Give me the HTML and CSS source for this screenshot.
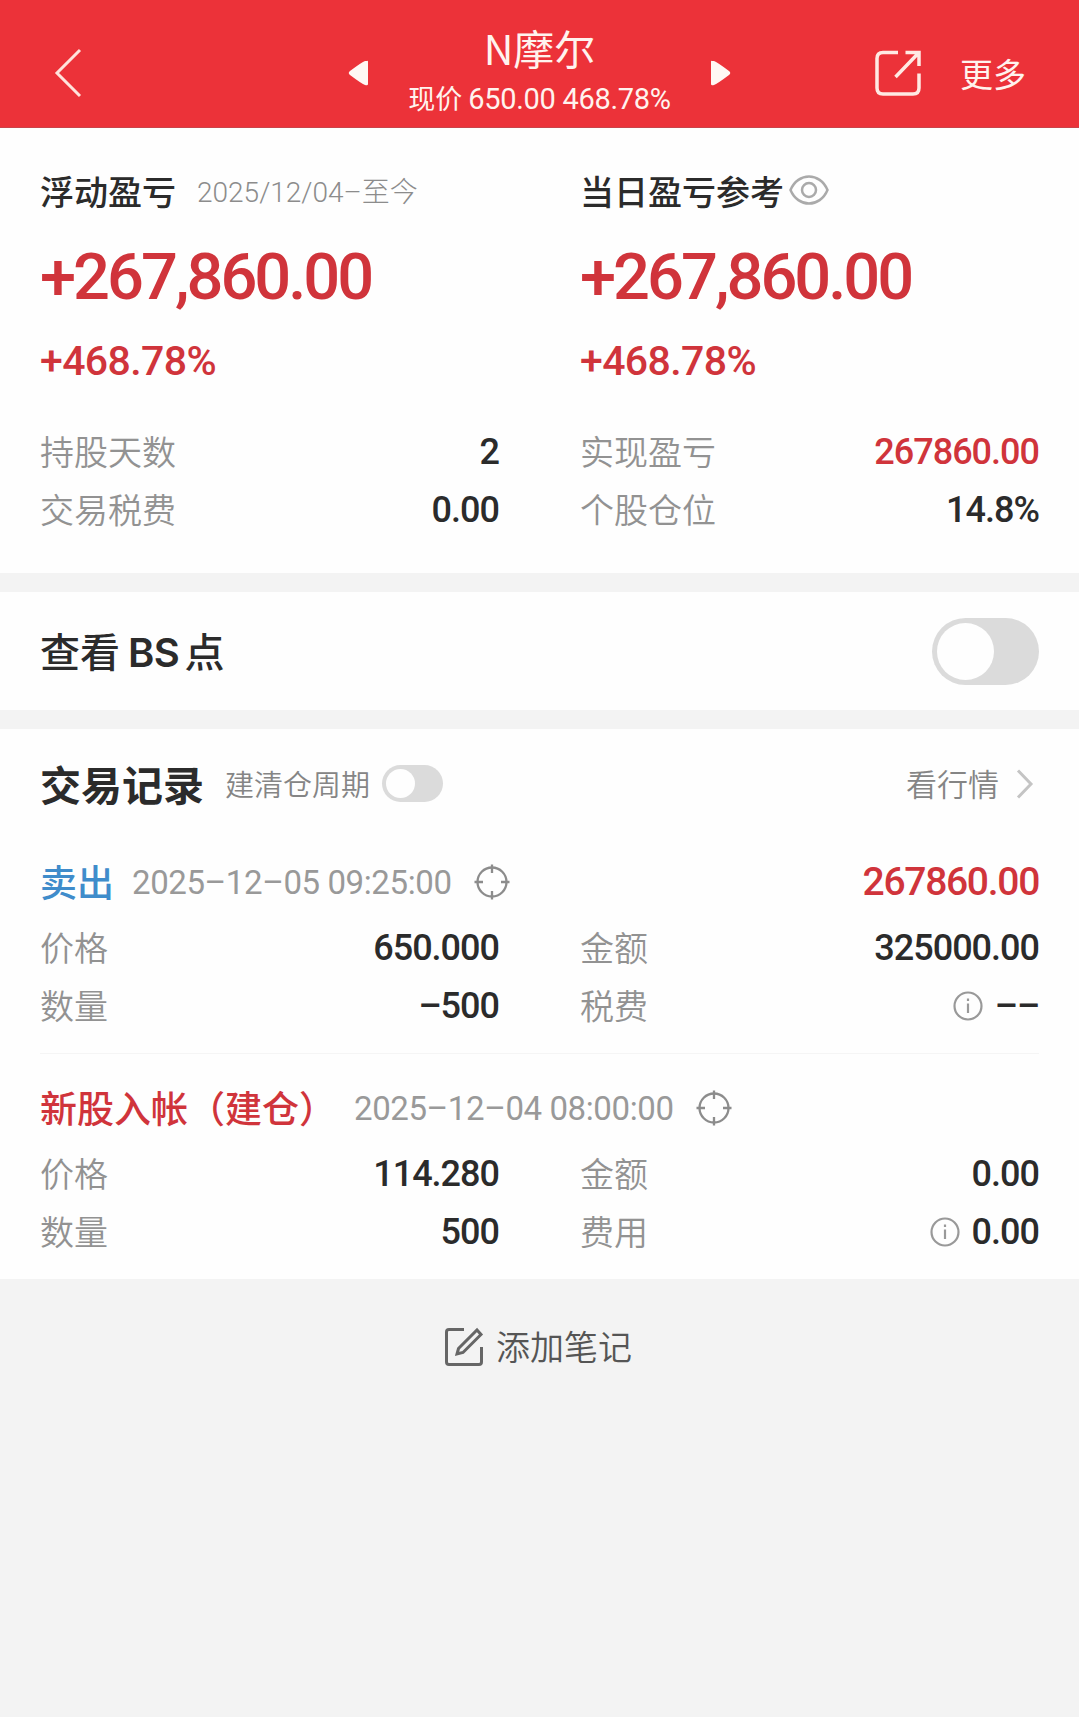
FILE: index.html
```html
<!DOCTYPE html>
<html lang="zh-CN">
<head>
    <meta charset="utf-8">
    <title>N摩尔</title>
    <link rel="stylesheet" href="styles.css">
</head>

<body>
    <div class="header">
        <svg class="back" width="30" height="52" viewBox="0 0 30 52"><path d="M27 3L4 26L27 49"/></svg>
        <div class="stock">
            <svg class="arrow" width="22" height="30" viewBox="0 0 22 30"><path d="M20 3Q21 2 21 4V26Q21 28 18 27Q15 26 3 17Q0.500 15 3 13Q15 4 18 3Z"/></svg>
            <div class="stock-info">
                <div class="stock-name">N摩尔</div>
                <div class="stock-price">现价 <span class="num">650.00 468.78%</span></div>
            </div>
            <svg class="arrow" width="22" height="30" viewBox="0 0 22 30"><path d="M2 3Q1 2 1 4V26Q1 28 4 27Q7 26 19 17Q21.500 15 19 13Q7 4 4 3Z"/></svg>
        </div>
        <div class="actions">
            <svg class="share" width="48" height="48" viewBox="0 0 48 48"><path d="M24 3.500H9Q3 3.500 3 9.500V39Q3 45 9 45H39Q45 45 45 39V24.500M31.500 3.500H45V17M45 3.500L21.500 28"/></svg>
            <div class="more">更多</div>
        </div>
    </div>

    <div class="card summary">
        <div class="columns">
            <div class="col">
                <div class="profit-title">浮动盈亏 <span class="range">2025/12/04–至今</span></div>
                <div class="profit num">+267,860.00</div>
                <div class="percent num">+468.78%</div>
                <div class="row"><span class="label">持股天数</span><span class="value num">2</span></div>
                <div class="row"><span class="label">交易税费</span><span class="value num">0.00</span></div>
            </div>
            <div class="col">
                <div class="profit-title">当日盈亏参考<svg class="eye" width="42" height="32" viewBox="0 0 42 32"><path d="M2.500 16C10-2 32-2 39.500 16C32 34 10 34 2.500 16Z"/><circle cx="21" cy="16" r="7"/></svg></div>
                <div class="profit num">+267,860.00</div>
                <div class="percent num">+468.78%</div>
                <div class="row"><span class="label">实现盈亏</span><span class="value num red">267860.00</span></div>
                <div class="row"><span class="label">个股仓位</span><span class="value num">14.8%</span></div>
            </div>
        </div>
    </div>

    <div class="card bs">
        <div class="bs-title">查看<span class="latin">BS</span>点</div>
        <div class="switch"></div>
    </div>

    <div class="card records">
        <div class="records-head">
            <div class="records-title">交易记录</div>
            <div class="cycle">建清仓周期</div>
            <div class="switch small"></div>
            <div class="quote">看行情</div>
            <svg class="chevron" width="18" height="32" viewBox="0 0 18 32"><path d="M2 2.500L15 16L2 29.500"/></svg>
        </div>

        <div class="record">
            <div class="record-head">
                <span class="type sell">卖出</span>
                <span class="time num">2025–12–05 09:25:00</span>
                <svg class="target" width="36" height="36" viewBox="0 0 36 36"><circle cx="18" cy="18" r="14.500"/><path d="M18 0.500V9M18 27V35.500M0.500 18H9M27 18H35.500"/></svg>
                <span class="total num">267860.00</span>
            </div>
            <div class="columns">
                <div class="col">
                    <div class="row"><span class="label">价格</span><span class="value num">650.000</span></div>
                    <div class="row"><span class="label">数量</span><span class="value num">–500</span></div>
                </div>
                <div class="col">
                    <div class="row"><span class="label">金额</span><span class="value num">325000.00</span></div>
                    <div class="row"><span class="label">税费</span><span class="value num"><svg class="info" width="30" height="30" viewBox="0 0 30 30"><circle cx="15" cy="15" r="13.500"/><path d="M15 12.500V22M15 7.500V10"/></svg>––</span></div>
                </div>
            </div>
        </div>

        <div class="record second">
            <div class="record-head">
                <span class="type buy">新股入帐（建仓）</span>
                <span class="time num">2025–12–04 08:00:00</span>
                <svg class="target" width="36" height="36" viewBox="0 0 36 36"><circle cx="18" cy="18" r="14.500"/><path d="M18 0.500V9M18 27V35.500M0.500 18H9M27 18H35.500"/></svg>
            </div>
            <div class="columns">
                <div class="col">
                    <div class="row"><span class="label">价格</span><span class="value num">114.280</span></div>
                    <div class="row"><span class="label">数量</span><span class="value num">500</span></div>
                </div>
                <div class="col">
                    <div class="row"><span class="label">金额</span><span class="value num">0.00</span></div>
                    <div class="row"><span class="label">费用</span><span class="value num"><svg class="info" width="30" height="30" viewBox="0 0 30 30"><circle cx="15" cy="15" r="13.500"/><path d="M15 12.500V22M15 7.500V10"/></svg>0.00</span></div>
                </div>
            </div>
        </div>
    </div>

    <div class="note">
        <svg class="edit" width="40" height="40" viewBox="0 0 40 40"><path d="M20 2.500H5Q2.500 2.500 2.500 5V35Q2.500 37.500 5 37.500H35Q37.500 37.500 37.500 35V20M33 3L37 7.500L19 25.500L13 27L14.500 21.500Z"/></svg>
        <span>添加笔记</span>
    </div>
</body>
</html>
```

FILE: styles.css
```css
* {
    box-sizing: border-box;
}

body {
    margin: 0;
    min-height: 1717px;
    background-color: #f3f3f3;
    color: #2b2b2b;
    font-family: "Noto Sans CJK SC", sans-serif;
    white-space: nowrap;
}

svg {
    display: block;
    flex: none;
    fill: none;
}

.num {
    font-family: Roboto, "Noto Sans CJK SC", sans-serif;
}

.red {
    color: #d0343b;
}

/* header */
.header {
    height: 128px;
    padding: 0 53px 0 53px;
    display: grid;
    grid-template-columns: 1fr 386px 1fr;
    align-items: center;
    background-color: #ec3239;
    border-bottom: 1px solid #c9444a;
    color: #fff3ee;
}

.back {
    stroke: #ffe3dc;
    stroke-width: 3;
    margin-top: 18px;
}

.stock {
    display: flex;
    justify-content: space-between;
    align-items: center;
}

.arrow {
    fill: #fff8f4;
    margin-top: 18px;
}

.stock-info {
    text-align: center;
    padding-top: 18px;
}

.stock-name {
    font-size: 41px;
    line-height: 52px;
}

.stock-price {
    font-size: 27px;
    line-height: 50px;
}

.stock-price .num {
    font-size: 29px;
    letter-spacing: -0.3px;
}

.actions {
    display: flex;
    justify-content: flex-end;
    align-items: center;
    gap: 38px;
    margin-top: 18px;
}

.share {
    stroke: #ffe9e3;
    stroke-width: 3.5;
}

.more {
    font-size: 33px;
    line-height: 48px;
}

/* cards */
.card {
    background-color: #fefefe;
    padding: 0 40px;
    margin-bottom: 19px;
}

.columns {
    display: grid;
    grid-template-columns: 459px 459px;
    column-gap: 81px;
}

.row {
    display: flex;
    justify-content: space-between;
    align-items: center;
    height: 58px;
}

.label {
    padding-bottom: 4px;
    font-size: 34px;
    font-weight: 350;
    color: #929292;
}

.value {
    display: flex;
    align-items: center;
    font-size: 36px;
    font-weight: 500;
    letter-spacing: -1px;
}

.summary {
    height: 445px;
    padding-top: 40px;
}

.profit-title {
    display: flex;
    align-items: center;
    height: 44px;
    font-size: 34px;
    font-weight: 500;
}

.range {
    margin-left: 21px;
    font-family: Roboto, "Noto Sans CJK SC", sans-serif;
    font-size: 28px;
    font-weight: 300;
    color: #8c8c8c;
}

.eye {
    margin-left: 4px;
    stroke: #aaa;
    stroke-width: 2.5;
}

.profit {
    margin-top: 30px;
    font-size: 65px;
    line-height: 70px;
    font-weight: 500;
    letter-spacing: -3px;
    color: #d0343b;
}

.percent {
    margin: 24px 0 37px;
    font-size: 41px;
    line-height: 50px;
    font-weight: 500;
    letter-spacing: -0.6px;
    color: #d0343b;
}

/* switches */
.switch {
    width: 107px;
    height: 67px;
    padding: 5px;
    border-radius: 34px;
    background-color: #dbdbdb;
}

.switch::before {
    content: "";
    display: block;
    width: 57px;
    height: 57px;
    border-radius: 50%;
    background-color: #fefefe;
}

.switch.small {
    width: 61px;
    height: 37px;
    padding: 4px;
    margin: 0 0 2px 12px;
}

.switch.small::before {
    width: 29px;
    height: 29px;
}

.bs {
    display: flex;
    justify-content: space-between;
    align-items: center;
    height: 118px;
}

.bs-title {
    padding-bottom: 3px;
    font-size: 40px;
    font-weight: 500;
}

.latin {
    margin: 0 5px 0 8px;
    font-family: Inter, sans-serif;
    font-weight: 600;
    letter-spacing: -0.5px;
}

/* trade records */
.records {
    height: 550px;
    margin-bottom: 0;
}

.records-head {
    display: flex;
    align-items: center;
    height: 112px;
    padding-bottom: 2px;
}

.records-title {
    padding-bottom: 2px;
    font-size: 41px;
    font-weight: 700;
}

.cycle {
    padding-bottom: 2px;
    margin-left: 21px;
    font-size: 29px;
    font-weight: 350;
    color: #858585;
}

.quote {
    padding-bottom: 4px;
    margin-left: auto;
    font-size: 31px;
    font-weight: 350;
    color: #858585;
}

.chevron {
    margin: 0 5px 0 17px;
    stroke: #c4c4c4;
    stroke-width: 3;
}

.record {
    height: 213px;
    padding-top: 8px;
    border-bottom: 1px solid #f5f5f5;
}

.record.second {
    padding-top: 21px;
    border-bottom: none;
}

.record-head {
    display: flex;
    align-items: center;
    height: 66px;
    margin-bottom: 4px;
}

.type {
    padding-bottom: 2px;
    font-size: 37px;
    font-weight: 500;
}

.sell {
    color: #3f8ccb;
}

.buy {
    color: #d0343b;
}

.time {
    margin-left: 18px;
    font-size: 33px;
    color: #999;
    letter-spacing: -0.4px;
}

.target {
    margin-left: 22px;
    stroke: #8c8c8c;
    stroke-width: 2.3;
}

.total {
    margin-left: auto;
    font-size: 39px;
    font-weight: 500;
    letter-spacing: -1.3px;
    color: #d0343b;
}

.info {
    margin-right: 12px;
    stroke: #999;
    stroke-width: 2.2;
}

/* note button */
.note {
    display: flex;
    justify-content: center;
    align-items: center;
    gap: 12px;
    height: 136px;
    padding-right: 3px;
    font-size: 34px;
    font-weight: 350;
    color: #555;
}

.note span {
    padding-bottom: 3px;
}

.edit {
    stroke: #666;
    stroke-width: 3;
}
```
